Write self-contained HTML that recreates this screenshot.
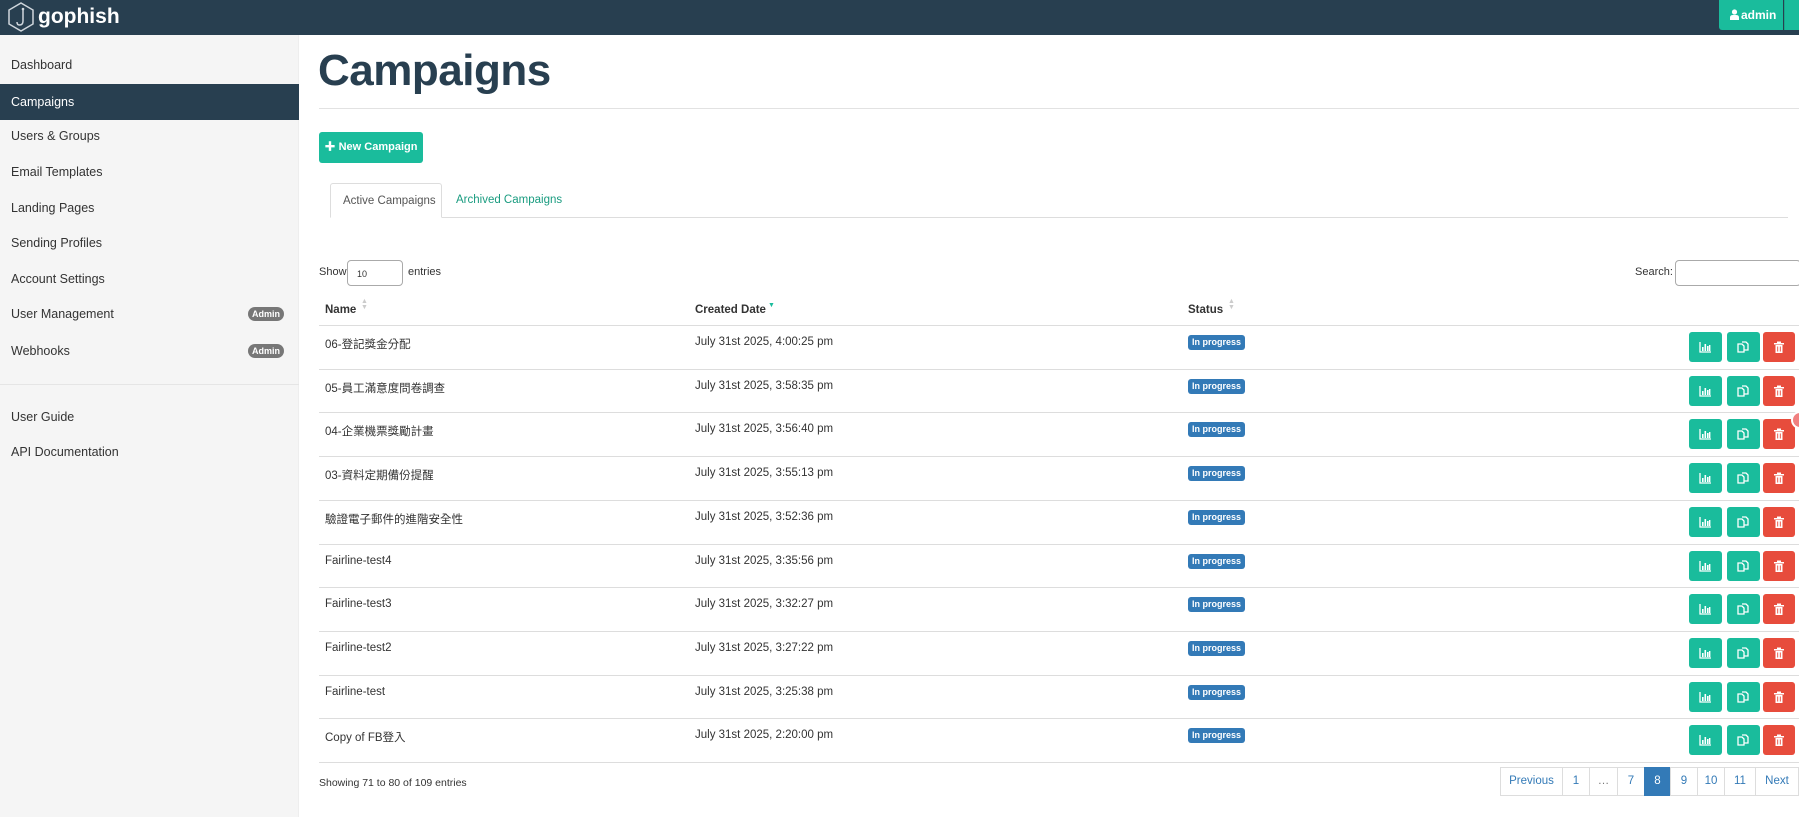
<!DOCTYPE html>
<html><head><meta charset="utf-8">
<style>
*{box-sizing:border-box;margin:0;padding:0}
body{width:1799px;height:817px;overflow:hidden;background:#fff;font-family:"Liberation Sans","Noto Sans CJK TC",sans-serif;color:#333;position:relative;font-size:12px}
div{white-space:nowrap}
.nav{position:absolute;left:0;top:0;width:1799px;height:35px;background:#283f50}
.logo{position:absolute;left:6px;top:2px}
.brand{position:absolute;left:38px;top:5px;color:#fff;font-weight:bold;font-size:21px}
.adm{position:absolute;left:1719px;top:0;width:64px;height:30px;background:#1abc9c;border-radius:0 0 0 3px;color:#fff;font-weight:bold;font-size:12px;line-height:30px;padding-left:11px}
.adm svg{vertical-align:-1px;margin-right:2px}
.adm2{position:absolute;left:1784px;top:0;width:15px;height:30px;background:#1abc9c;border-left:1px solid #17a88b}
.side{position:absolute;left:0;top:35px;width:299px;height:782px;background:#f5f5f5;border-right:1px solid #eee}
.si{position:absolute;left:0;width:299px;height:36px;line-height:36px;padding-left:11px;font-size:12.5px;color:#333}
.si.act{background:#283f50;color:#fff}
.badge{position:absolute;left:248px;top:11px;width:36px;height:14px;border-radius:7px;background:#777;color:#fff;font-size:9px;font-weight:bold;line-height:14px;text-align:center}
.sep{position:absolute;left:0;top:349px;width:299px;border-top:1px solid #e5e5e5}
h1{position:absolute;left:318px;top:46px;font-size:44px;font-weight:bold;color:#283f50;letter-spacing:-0.5px}
.hr{position:absolute;left:319px;top:108px;width:1480px;border-top:1px solid #e2e2e2}
.btnn{position:absolute;left:319px;top:132px;width:104px;height:31px;background:#1abc9c;border-radius:3px;color:#fff;font-size:11px;font-weight:bold;line-height:31px;text-align:center}
.tabs{position:absolute;left:330px;top:217px;width:1458px;border-top:1px solid #ddd}
.tab{position:absolute;top:183px;height:35px;line-height:34px;font-size:11.5px;padding:0 12px}
.tab.ta{left:330px;width:112px;border:1px solid #ddd;border-bottom:1px solid #fff;border-radius:3px 3px 0 0;color:#555;background:#fff}
.tab.tb{left:444px;color:#1a9c80}
.lbl{position:absolute;font-size:11px;color:#333}
.inp{position:absolute;border:1px solid #aaa;border-radius:4px;background:#fff}
.th{position:absolute;top:304px;font-weight:bold;font-size:11.5px;color:#333}
.line{position:absolute;left:319px;width:1480px;border-top:1px solid #ddd}
.cell{position:absolute;font-size:11.5px;color:#333}
.st{position:absolute;left:1188px;width:57px;height:15px;background:#337ab7;border-radius:3px;color:#fff;font-size:9px;font-weight:bold;line-height:15px;text-align:center}
.b{position:absolute;width:33px;height:30px;border-radius:3px;background:#1abc9c}
.b.r{background:#e74c3c;width:32px}
.b svg{position:absolute;left:10px;top:9px}
.pg{position:absolute;top:767px;height:29px;border:1px solid #ddd;line-height:27px;text-align:center;font-size:11.5px;color:#337ab7;background:#fff}
.pg.on{background:#337ab7;color:#fff;border-color:#337ab7}
.sort{position:absolute;font-size:7px;color:#ccc;line-height:6px}
</style></head><body>
<div class="nav">
<svg class="logo" width="30" height="30" viewBox="0 0 30 30"><polygon points="15,1 27,8 27,22 15,29 3,22 3,8" fill="none" stroke="#cfd6dc" stroke-width="1.5"/><path d="M17 8 V19 Q17 23 13.5 23 Q11 23 11 20" fill="none" stroke="#cfd6dc" stroke-width="1.5"/><circle cx="17" cy="7" r="1.3" fill="#cfd6dc"/></svg>
<div class="brand">gophish</div>
<div class="adm"><svg width="9" height="11" viewBox="0 0 9 11"><circle cx="4.5" cy="3" r="2.6" fill="#fff"/><path d="M0 11V8.5Q0 6 3 6H6Q9 6 9 8.5V11Z" fill="#fff"/></svg>admin</div><div class="adm2"></div>
</div>
<div class="side">
<div class="si" style="top:12px">Dashboard</div>
<div class="si act" style="top:49px">Campaigns</div>
<div class="si" style="top:83px">Users &amp; Groups</div>
<div class="si" style="top:119px">Email Templates</div>
<div class="si" style="top:155px">Landing Pages</div>
<div class="si" style="top:190px">Sending Profiles</div>
<div class="si" style="top:226px">Account Settings</div>
<div class="si" style="top:261px">User Management<span class="badge">Admin</span></div>
<div class="si" style="top:298px">Webhooks<span class="badge">Admin</span></div>
<div class="sep"></div>
<div class="si" style="top:364px">User Guide</div>
<div class="si" style="top:399px">API Documentation</div>
</div>
<h1>Campaigns</h1>
<div class="hr"></div>
<div class="btnn">✚ New Campaign</div>
<div class="tabs"></div>
<div class="tab ta">Active Campaigns</div>
<div class="tab tb">Archived Campaigns</div>
<div class="lbl" style="left:319px;top:266px">Show</div>
<div class="inp" style="left:347px;top:260px;width:56px;height:26px"><span style="position:absolute;left:9px;top:8px;font-size:9px">10</span></div>
<div class="lbl" style="left:408px;top:266px">entries</div>
<div class="lbl" style="left:1635px;top:266px">Search:</div>
<div class="inp" style="left:1675px;top:260px;width:126px;height:26px"></div>
<div class="th" style="left:325px">Name</div><div class="sort" style="left:361px;top:299px">▲<br>▼</div>
<div class="th" style="left:695px">Created Date</div><div class="sort" style="left:768px;top:303px;color:#1abc9c">▼</div>
<div class="th" style="left:1188px">Status</div><div class="sort" style="left:1228px;top:299px">▲<br>▼</div>
<div class="line" style="top:325px"></div>
<div id="rows"></div>
<div class="lbl" style="left:319px;top:777px;font-size:10.5px">Showing 71 to 80 of 109 entries</div>
<div class="pg" style="left:1500px;width:63px">Previous</div>
<div class="pg" style="left:1562px;width:28px">1</div>
<div class="pg" style="left:1589px;width:29px;color:#777">…</div>
<div class="pg" style="left:1617px;width:28px">7</div>
<div class="pg on" style="left:1644px;width:27px">8</div>
<div class="pg" style="left:1670px;width:28px">9</div>
<div class="pg" style="left:1697px;width:28px">10</div>
<div class="pg" style="left:1724px;width:32px">11</div>
<div class="pg" style="left:1755px;width:44px">Next</div>
<div style="position:absolute;left:1791px;top:411px;width:18px;height:18px;border-radius:9px;background:#f08080;border:2px solid #fff"></div>
<script>
const d=[["06-登記獎金分配","4:00:25"],["05-員工滿意度問卷調查","3:58:35"],["04-企業機票獎勵計畫","3:56:40"],["03-資料定期備份提醒","3:55:13"],["驗證電子郵件的進階安全性","3:52:36"],["Fairline-test4","3:35:56"],["Fairline-test3","3:32:27"],["Fairline-test2","3:27:22"],["Fairline-test","3:25:38"],["Copy of FB登入","2:20:00"]];
const chart='<svg width="13" height="12" viewBox="0 0 13 12"><path d="M1 1V11H12" stroke="#fff" stroke-width="1.3" fill="none"/><rect x="3" y="6" width="1.6" height="4" fill="#fff"/><rect x="5.5" y="3" width="1.6" height="7" fill="#fff"/><rect x="8" y="5" width="1.6" height="5" fill="#fff"/><rect x="10" y="4" width="1.4" height="6" fill="#fff"/></svg>';
const copy='<svg width="13" height="13" viewBox="0 0 13 13"><path d="M1 3H5L7 5V11H1Z" fill="none" stroke="#fff" stroke-width="1.3"/><path d="M5 1H9L11 3V9H7" fill="none" stroke="#fff" stroke-width="1.3"/></svg>';
const trash='<svg width="12" height="13" viewBox="0 0 12 13"><rect x="1" y="2" width="10" height="1.5" fill="#fff"/><rect x="4" y="0.5" width="4" height="1.5" fill="#fff"/><path d="M2.5 4H9.5V12H2.5Z" fill="#fff"/><path d="M4.7 5.5V10.5M7.3 5.5V10.5" stroke="#e74c3c" stroke-width="0.9"/></svg>';
let h='';
d.forEach((r,i)=>{const t=325+i*43.7;
h+=`<div class="cell" style="left:325px;top:${t+11}px">${r[0]}</div><div class="cell" style="left:695px;top:${t+11}px">July 31st 2025, ${r[1]} pm</div><div class="st" style="top:${t+10}px">In progress</div><div class="b" style="left:1689px;top:${t+7}px">${chart}</div><div class="b" style="left:1727px;top:${t+7}px">${copy}</div><div class="b r" style="left:1763px;top:${t+7}px">${trash}</div><div class="line" style="top:${t+43.7}px"></div>`;});
document.getElementById('rows').innerHTML=h;
</script>
</body></html>
